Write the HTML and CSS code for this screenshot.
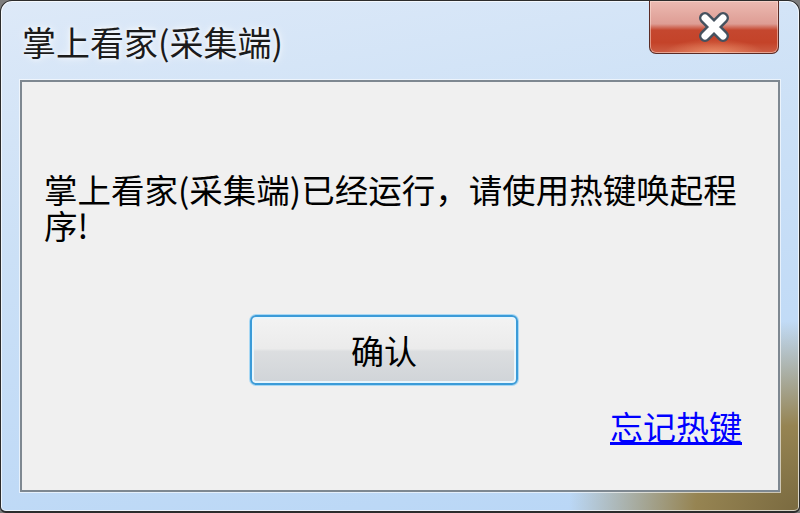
FILE: index.html
```html
<!DOCTYPE html>
<html lang="zh-CN">
<head>
    <meta charset="UTF-8">
    <title>掌上看家(采集端)</title>
    <link rel="stylesheet" href="styles.css">
</head>
<body>
    <div class="window">
        <div class="titlebar">
            <div class="title">掌上看家(采集端)</div>
            <div class="close-btn">
                <svg width="34" height="30" viewBox="0 0 34 30">
                    <path d="M8 6 L26 24 M26 6 L8 24" stroke="#45525f" stroke-width="12" stroke-linecap="round"/>
                    <path d="M8 6 L26 24 M26 6 L8 24" stroke="#ffffff" stroke-width="7" stroke-linecap="round"/>
                </svg>
            </div>
        </div>

        <div class="client">
            <p class="message">掌上看家(采集端)已经运行，请使用热键唤起程序!</p>
            <button class="ok-btn">确认</button>
            <a class="forgot-link" href="#">忘记热键</a>
        </div>
    </div>
</body>
</html>
```

FILE: styles.css
```css
body {
    margin: 0;
    background-color: #7d7d7d;
    font-family: "Noto Sans CJK SC", "Liberation Sans", sans-serif;
}
.window {
    width: 800px;
    height: 513px;
    box-sizing: border-box;
    border: 1px solid #2c2c2c;
    border-bottom-width: 2px;
    border-radius: 12px 12px 6px 6px;
    background:
        radial-gradient(ellipse 230px 190px at 100% 100%, #7a6a40 0%, #968452 45%, rgba(160, 170, 160, 0) 100%),
        linear-gradient(170deg, #dde9f8 0%, #cbe0f6 40%, #b8d6f6 100%);
    box-shadow: inset 0 0 0 1px rgba(255, 255, 255, 0.7);
    padding: 0 19px 19px 19px;
    display: flex;
    flex-direction: column;
}
.titlebar {
    height: 79px;
    display: flex;
    justify-content: space-between;
    align-items: flex-start;
}
.title {
    margin-top: 20px;
    padding-left: 2px;
    font-size: 34px;
    line-height: 42px;
    color: #1b1b1b;
    text-shadow: 0 0 10px rgba(255, 255, 255, 0.9), 0 0 4px rgba(255, 255, 255, 0.8);
}
.close-btn {
    width: 130px;
    height: 53px;
    margin-right: 1px;
    box-sizing: border-box;
    border: 1px solid #5b2b25;
    border-top: none;
    border-radius: 0 0 7px 7px;
    background:
        radial-gradient(ellipse 50px 14px at 50% 100%, rgba(240, 150, 110, 0.8), rgba(240, 150, 110, 0)),
        linear-gradient(to bottom, #ecbab2 0%, #de9d94 44%, #c5472f 56%, #c44329 80%, #cd5e45 100%);
    box-shadow: inset 0 0 0 1px rgba(255, 230, 220, 0.5);
    display: flex;
    justify-content: center;
    align-items: center;
}
.client {
    flex: 1;
    box-sizing: border-box;
    border: 2px solid #7e8891;
    box-shadow: 0 0 0 1px rgba(255, 255, 255, 0.6);
    background-color: #f0f0f0;
    padding: 0 36px 0 22px;
    display: flex;
    flex-direction: column;
}
.message {
    width: 715px;
    margin: 89px 0 0 0;
    font-size: 33.5px;
    line-height: 36px;
    color: #000;
}
.ok-btn {
    align-self: flex-start;
    margin: 72px 0 0 206px;
    width: 268px;
    height: 70px;
    border: 2px solid #3b9bd8;
    border-radius: 6px;
    box-shadow: 0 0 0 1px #a8d8f4, inset 0 0 0 2px #e8f6fd;
    background: linear-gradient(to bottom, #f3f3f3 0%, #ebebeb 48%, #dcdee0 52%, #d0d4d8 100%);
    font-family: "Noto Sans CJK SC", sans-serif;
    font-size: 33px;
    color: #000;
    padding: 0;
}
.forgot-link {
    align-self: flex-end;
    margin-top: 23px;
    font-size: 33px;
    line-height: 36px;
    color: #0000ff;
    text-decoration: underline;
}
```
